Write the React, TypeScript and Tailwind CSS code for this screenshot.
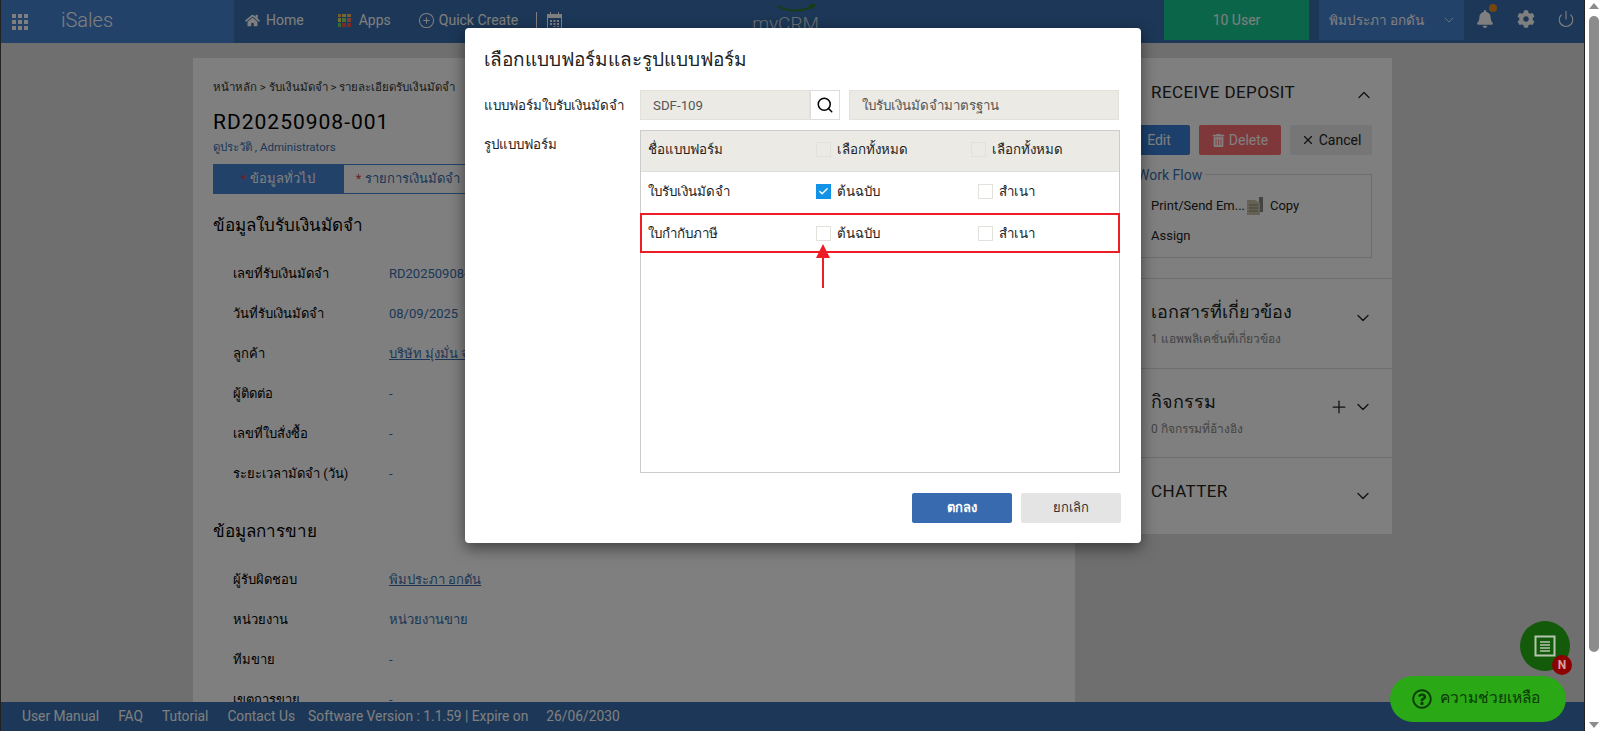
import { useState } from "react";
import { ChevronDown, ChevronUp, Plus, Search, X, Check, CirclePlus, Power } from "lucide-react";
import { FaBell, FaCog, FaHome, FaTrashAlt, FaRegQuestionCircle } from "react-icons/fa";

const generalRows = [
    { label: "เลขที่รับเงินมัดจำ", value: "RD20250908-001" },
    { label: "วันที่รับเงินมัดจำ", value: "08/09/2025" },
    { label: "ลูกค้า", value: "บริษัท มุ่งมั่น จำกัด", link: true },
    { label: "ผู้ติดต่อ", value: "-" },
    { label: "เลขที่ใบสั่งซื้อ", value: "-" },
    { label: "ระยะเวลามัดจำ (วัน)", value: "-" },
];

const salesRows = [
    { label: "ผู้รับผิดชอบ", value: "พิมประภา อกดัน", link: true },
    { label: "หน่วยงาน", value: "หน่วยงานขาย" },
    { label: "ทีมขาย", value: "-" },
    { label: "เขตการขาย", value: "-" },
];

function InfoRow({ label, value, link }: { label: string; value: string; link?: boolean }) {
    return (
        <div className="flex h-10 shrink-0 items-center pl-5 text-[13px]">
            <span className="w-[156px] text-black">{label}</span>
            <span className={link ? "text-[#386fae] underline" : "text-[#386fae]"}>{value}</span>
        </div>
    );
}

function Box({ checked, muted }: { checked?: boolean; muted?: boolean }) {
    if (checked) {
        return (
            <span className="flex h-[15px] w-[15px] items-center justify-center bg-[#1293e8]">
                <Check className="h-[11px] w-[11px] text-white" strokeWidth={3} />
            </span>
        );
    }
    return <span className={`block h-[15px] w-[15px] border border-[#e2e1dc] ${muted ? "bg-[#ebeae4]" : "bg-white"}`} />;
}

function FormRow({ name, checked }: { name: string; checked?: boolean }) {
    return (
        <div className="flex h-[42px] items-center pb-[3px] text-[13.3px] text-[#222]">
            <span className="w-[175px] pl-[7px]">{name}</span>
            <span className="flex w-[162px] items-center gap-[6px]">
                <Box checked={checked} />
                ต้นฉบับ
            </span>
            <span className="flex items-center gap-[6px]">
                <Box />
                สำเนา
            </span>
        </div>
    );
}

function AppsIcon() {
    const colors = ["#ffb060", "#f0d060", "#ffb860", "#e0e060", "#90e060", "#ff8060", "#50e060", "#ff5050", "#ff5050"];
    return (
        <span className="grid h-[13px] w-[13px] grid-cols-3 gap-px">
            {colors.map((c, i) => (
                <span key={i} className="block" style={{ backgroundColor: c }} />
            ))}
        </span>
    );
}

function CalendarIcon() {
    return (
        <svg className="ml-[10px]" width="15" height="17" viewBox="0 0 15 17" fill="currentColor">
            <path d="M0 2h3V0h1v2h7V0h1v2h3v15H0zM1 6v10h13V6z" />
            <path d="M3 8h2v2H3zM6.500 8h2v2h-2zM10 8h2v2h-2zM3 11h2v2H3zM6.500 11h2v2h-2zM10 11h2v2h-2zM6.500 14h2v1h-2zM10 14h2v1h-2z" />
        </svg>
    );
}

function Topbar() {
    return (
        <header className="flex h-[43px] shrink-0 bg-[#386fae] text-white">
            <div className="flex w-[234px] items-center bg-[#4684d4] pl-3">
                <span className="grid h-4 w-4 grid-cols-3 gap-[2px]">
                    {Array.from({ length: 9 }).map((_, i) => (
                        <span key={i} className="block bg-white" />
                    ))}
                </span>
                <span className="ml-[33px] pb-[3px] text-[20px] font-light leading-none">iSales</span>
            </div>
            <nav className="flex items-center pb-[3px] text-[14px]">
                <FaHome className="ml-[11px] h-[15px] w-[15px]" />
                <span className="ml-[6px]">Home</span>
                <span className="ml-[34px]">
                    <AppsIcon />
                </span>
                <span className="ml-2">Apps</span>
                <CirclePlus className="ml-[27px] h-[17px] w-[17px]" strokeWidth={1.5} />
                <span className="ml-[4px]">Quick Create</span>
                <span className="ml-[18px] h-4 w-px bg-white" />
                <CalendarIcon />
            </nav>
            <div className="relative ml-[190px] w-[70px] pt-[14px] text-[19px] font-light leading-none text-[#d8dde0]">
                myCRM
                <svg className="absolute left-[26px] top-[3px]" width="40" height="10" viewBox="0 0 40 10">
                    <path d="M0 3 C10 9 24 9 35 3" fill="none" stroke="#2d7a2d" strokeWidth="2" />
                    <path d="M39 1 L31 1 L35 6 Z" fill="#2d7a2d" />
                </svg>
            </div>
            <div className="ml-auto flex h-10 w-[145px] items-center justify-center bg-[#16ca92] text-[14px]">10 User</div>
            <div className="ml-[10px] flex h-10 w-[145px] items-center bg-[#4684d4] pl-[10px] text-[13.5px]">
                <span>พิมประภา อกดัน</span>
                <ChevronDown className="ml-auto mr-[7px] h-4 w-4 opacity-70" strokeWidth={1.5} />
            </div>
            <div className="relative ml-[11px] flex w-[110px] items-center pb-[5px]">
                <FaBell className="ml-[1px] h-[18px] w-[18px]" />
                <span className="absolute left-[14px] top-[4px] h-2 w-2 rounded-full bg-[#f08a1c]" />
                <FaCog className="ml-[23px] h-[18px] w-[18px]" />
                <Power className="ml-[22px] h-[18px] w-[18px]" strokeWidth={1.5} />
            </div>
        </header>
    );
}

function LeftCard() {
    return (
        <section className="flex w-[882px] shrink-0 flex-col overflow-hidden bg-white pl-5 pt-[21px]">
            <div className="text-[11.5px] leading-4 text-[#333]">หน้าหลัก &gt; รับเงินมัดจำ &gt; รายละเอียดรับเงินมัดจำ</div>
            <h1 className="mt-[13px] text-[21px] leading-7 tracking-[1px] text-black">RD20250908-001</h1>
            <div className="mt-[3px] text-[11.5px] leading-4 text-[#386fae]">ดูประวัติ , Administrators</div>
            <div className="mt-[9px] flex h-[30px] shrink-0 text-[13px]">
                <div className="flex w-[130px] items-center justify-center bg-[#4684d4] text-white">
                    <span className="mr-1 text-[#e04040]">*</span>ข้อมูลทั่วไป
                </div>
                <div className="flex w-[130px] items-center justify-center border border-[#4684d4] text-[#386fae]">
                    <span className="mr-1 text-[#e04040]">*</span>รายการเงินมัดจำ
                </div>
            </div>
            <h2 className="mt-[15px] text-[17px] leading-8 text-black">ข้อมูลใบรับเงินมัดจำ</h2>
            <div className="mt-[13px] flex flex-col">
                {generalRows.map((r) => (
                    <InfoRow key={r.label} {...r} />
                ))}
            </div>
            <h2 className="mt-[21px] text-[17px] leading-8 text-black">ข้อมูลการขาย</h2>
            <div className="mt-[13px] flex flex-col">
                {salesRows.map((r) => (
                    <InfoRow key={r.label} {...r} />
                ))}
            </div>
        </section>
    );
}

function RightCard() {
    return (
        <aside className="ml-5 flex h-[476px] w-[297px] shrink-0 flex-col bg-white text-[#222]">
            <div className="h-[221px] border-b border-[#ddd] pl-[56px] pr-[20px] pt-[21px]">
                <div className="flex items-center justify-between">
                    <span className="text-[17px] leading-6 tracking-[0.4px]">RECEIVE DEPOSIT</span>
                    <ChevronUp className="mr-[-2px] mt-[6px] h-5 w-5" strokeWidth={1.5} />
                </div>
                <div className="ml-[-31px] mt-5 flex h-[30px] gap-[9px] text-[14px] text-white">
                    <div className="flex w-[70px] items-center justify-center rounded-[2px] bg-[#387ed6] pl-2">Edit</div>
                    <div className="flex w-[82px] items-center justify-center gap-1 rounded-[2px] bg-[#ff7074]">
                        <FaTrashAlt className="h-[13px] w-[13px]" />
                        Delete
                    </div>
                    <div className="flex w-[82px] items-center justify-center gap-1 rounded-[2px] bg-[#ececec] text-[#222]">
                        <X className="h-[14px] w-[14px]" />
                        Cancel
                    </div>
                </div>
                <div className="relative ml-[-31px] mt-[19px] h-[84px] border border-[#ddd] text-[13px]">
                    <span className="absolute left-[13px] top-[-10px] bg-white px-[3px] text-[14px] leading-5 text-[#386fae]">Work Flow</span>
                    <div className="flex items-center pl-[30px] pt-[21px] leading-5">
                        <span>Print/Send Em...</span>
                        <svg className="ml-[2px]" width="17" height="18" viewBox="0 0 17 18">
                            <path d="M12 0h4v15h-4z" fill="#888" />
                            <path d="M0 3h8l5 3v12H0z" fill="#c8c4a8" />
                            <path d="M2 8h9M2 11h9M2 14h9" stroke="#8a8770" />
                        </svg>
                        <span className="ml-[6px]">Copy</span>
                    </div>
                    <div className="pl-[30px] pt-[10px] leading-5">Assign</div>
                </div>
            </div>
            <div className="relative h-[90px] border-b border-[#ddd] pl-[56px] pt-[17px]">
                <div className="text-[18px] leading-8">เอกสารที่เกี่ยวข้อง</div>
                <div className="mt-[1px] text-[12px] leading-5 text-[#888]">1 แอพพลิเคชั่นที่เกี่ยวข้อง</div>
                <ChevronDown className="absolute right-[19px] top-[29px] h-5 w-5" strokeWidth={1.5} />
            </div>
            <div className="relative h-[89px] border-b border-[#ddd] pl-[56px] pt-[17px]">
                <div className="text-[18px] leading-8">กิจกรรม</div>
                <div className="mt-[1px] text-[12px] leading-5 text-[#888]">0 กิจกรรมที่อ้างอิง</div>
                <Plus className="absolute right-[43px] top-[28px] h-5 w-5" strokeWidth={1.5} />
                <ChevronDown className="absolute right-[19px] top-[28px] h-5 w-5" strokeWidth={1.5} />
            </div>
            <div className="relative flex-1 pl-[56px] pt-[21px]">
                <div className="text-[17px] leading-6 tracking-[0.4px]">CHATTER</div>
                <ChevronDown className="absolute right-[19px] top-[28px] h-5 w-5" strokeWidth={1.5} />
            </div>
        </aside>
    );
}

function Footer() {
    return (
        <footer className="flex h-[29px] shrink-0 items-center bg-[#386fae] pl-[22px] text-[13.8px] text-white">
            <span>User Manual</span>
            <span className="ml-[19px]">FAQ</span>
            <span className="ml-[19px]">Tutorial</span>
            <span className="ml-[19px]">Contact Us</span>
            <span className="ml-[13px]">Software Version : 1.1.59 | Expire on</span>
            <span className="ml-[18px]">26/06/2030</span>
        </footer>
    );
}

function FormDialog() {
    const [code] = useState("SDF-109");
    return (
        <div className="absolute left-[465px] top-[28px] z-20 h-[515px] w-[676px] rounded-[4px] bg-white pl-[19px] pr-5 pt-[18px] shadow-[0_5px_15px_rgba(0,0,0,0.5)]">
            <h3 className="text-[19px] leading-7 text-[#222]">เลือกแบบฟอร์มและรูปแบบฟอร์ม</h3>
            <div className="mt-[16px] flex">
                <label className="w-[156px] pt-[6px] text-[13.3px] text-[#222]">แบบฟอร์มใบรับเงินมัดจำ</label>
                <div className="flex h-[30px] w-[170px] items-center border border-[#e2e1dc] bg-[#ebeae4] pl-3 pt-[2px] text-[13.3px] text-[#555]">{code}</div>
                <button className="flex h-[30px] w-[30px] items-center justify-center border border-[#ddd] bg-white text-black">
                    <Search className="h-[18px] w-[18px]" />
                </button>
                <div className="ml-[9px] flex h-[30px] w-[270px] items-center border border-[#e2e1dc] bg-[#ebeae4] pl-3 pt-[2px] text-[13.3px] text-[#555]">ใบรับเงินมัดจำมาตรฐาน</div>
            </div>
            <div className="mt-[10px] flex">
                <label className="w-[156px] pt-[5px] text-[13.3px] text-[#222]">รูปแบบฟอร์ม</label>
                <div className="relative h-[343px] w-[480px] border border-[#ccc]">
                    <div className="flex h-[41px] items-center border-b border-[#ddd] bg-[#ebeae4] pb-[3px] text-[13.3px] text-[#222]">
                        <span className="w-[175px] pl-[7px]">ชื่อแบบฟอร์ม</span>
                        <span className="flex w-[155px] items-center gap-[6px]">
                            <Box muted />
                            เลือกทั้งหมด
                        </span>
                        <span className="flex items-center gap-[6px]">
                            <Box muted />
                            เลือกทั้งหมด
                        </span>
                    </div>
                    <FormRow name="ใบรับเงินมัดจำ" checked />
                    <FormRow name="ใบกำกับภาษี" />
                    {/* Annotation from the screenshot */}
                    <div className="absolute left-[-1px] right-[-1px] top-[82px] h-[40px] border-2 border-[#ee1c25]" />
                    <svg className="absolute left-[174px] top-[112px]" width="16" height="46" viewBox="0 0 16 46">
                        <path d="M8 1 L15 15 L1 15 Z" fill="#ee1c25" />
                        <path d="M8 14 V45" stroke="#ee1c25" strokeWidth="2" />
                    </svg>
                </div>
            </div>
            <div className="mt-[20px] flex justify-end gap-[9px] text-[13px]">
                <button className="h-[30px] w-[100px] rounded-[2px] bg-[#386ab0] font-bold text-white">ตกลง</button>
                <button className="h-[30px] w-[100px] rounded-[2px] bg-[#e4e4e4] text-[#333]">ยกเลิก</button>
            </div>
        </div>
    );
}

function ScrollTrack() {
    return (
        <div className="flex w-[15px] shrink-0 flex-col items-center bg-white pl-[2px]">
            <span className="mt-[3px] h-0 w-0 border-x-[5px] border-b-[6px] border-x-transparent border-b-[#8c8c8c]" />
            <span className="mt-[7px] h-[636px] w-[10px] rounded-[5px] bg-[#8c8c8c]" />
            <span className="mt-auto mb-[3px] h-0 w-0 border-x-[5px] border-t-[6px] border-x-transparent border-t-[#8c8c8c]" />
        </div>
    );
}

export default function App() {
    return (
        <div className="flex h-screen overflow-hidden bg-white font-['Roboto','Noto_Sans',sans-serif]">
            <div className="relative flex min-w-0 flex-1 flex-col">
                <Topbar />
                <main className="flex min-h-0 flex-1 bg-[#dedede] pl-[193px] pt-[15px]">
                    <LeftCard />
                    <RightCard />
                </main>
                <Footer />
                {/* Modal backdrop */}
                <div className="absolute inset-0 z-10 border-x border-[#222] bg-black/50" />
                <FormDialog />
                {/* Floating buttons */}
                <div className="absolute left-[1520px] top-[621px] z-10 flex h-[50px] w-[50px] items-center justify-center rounded-full bg-[#135a0a] text-[#b5c5b0]">
                    <svg width="22" height="22" viewBox="0 0 22 22" fill="none" stroke="currentColor">
                        <rect x="1.500" y="1.500" width="19" height="19" strokeWidth="2" />
                        <path d="M6 7h10M6 10h10M6 13h10M6 16h10" strokeWidth="1.4" />
                    </svg>
                </div>
                <div className="absolute left-[1552px] top-[655px] z-10 flex h-5 w-5 items-center justify-center rounded-full bg-[#8c0000] text-[12px] font-bold text-[#d8a0a0]">N</div>
                <button className="absolute left-[1390px] top-[676px] z-20 flex h-[46px] w-[176px] items-center gap-2 rounded-[23px] bg-[#2aa815] pl-[22px] text-[15.5px] font-medium text-[#0c3a08]">
                    <FaRegQuestionCircle className="h-5 w-5" />
                    ความช่วยเหลือ
                </button>
            </div>
            <ScrollTrack />
        </div>
    );
}
